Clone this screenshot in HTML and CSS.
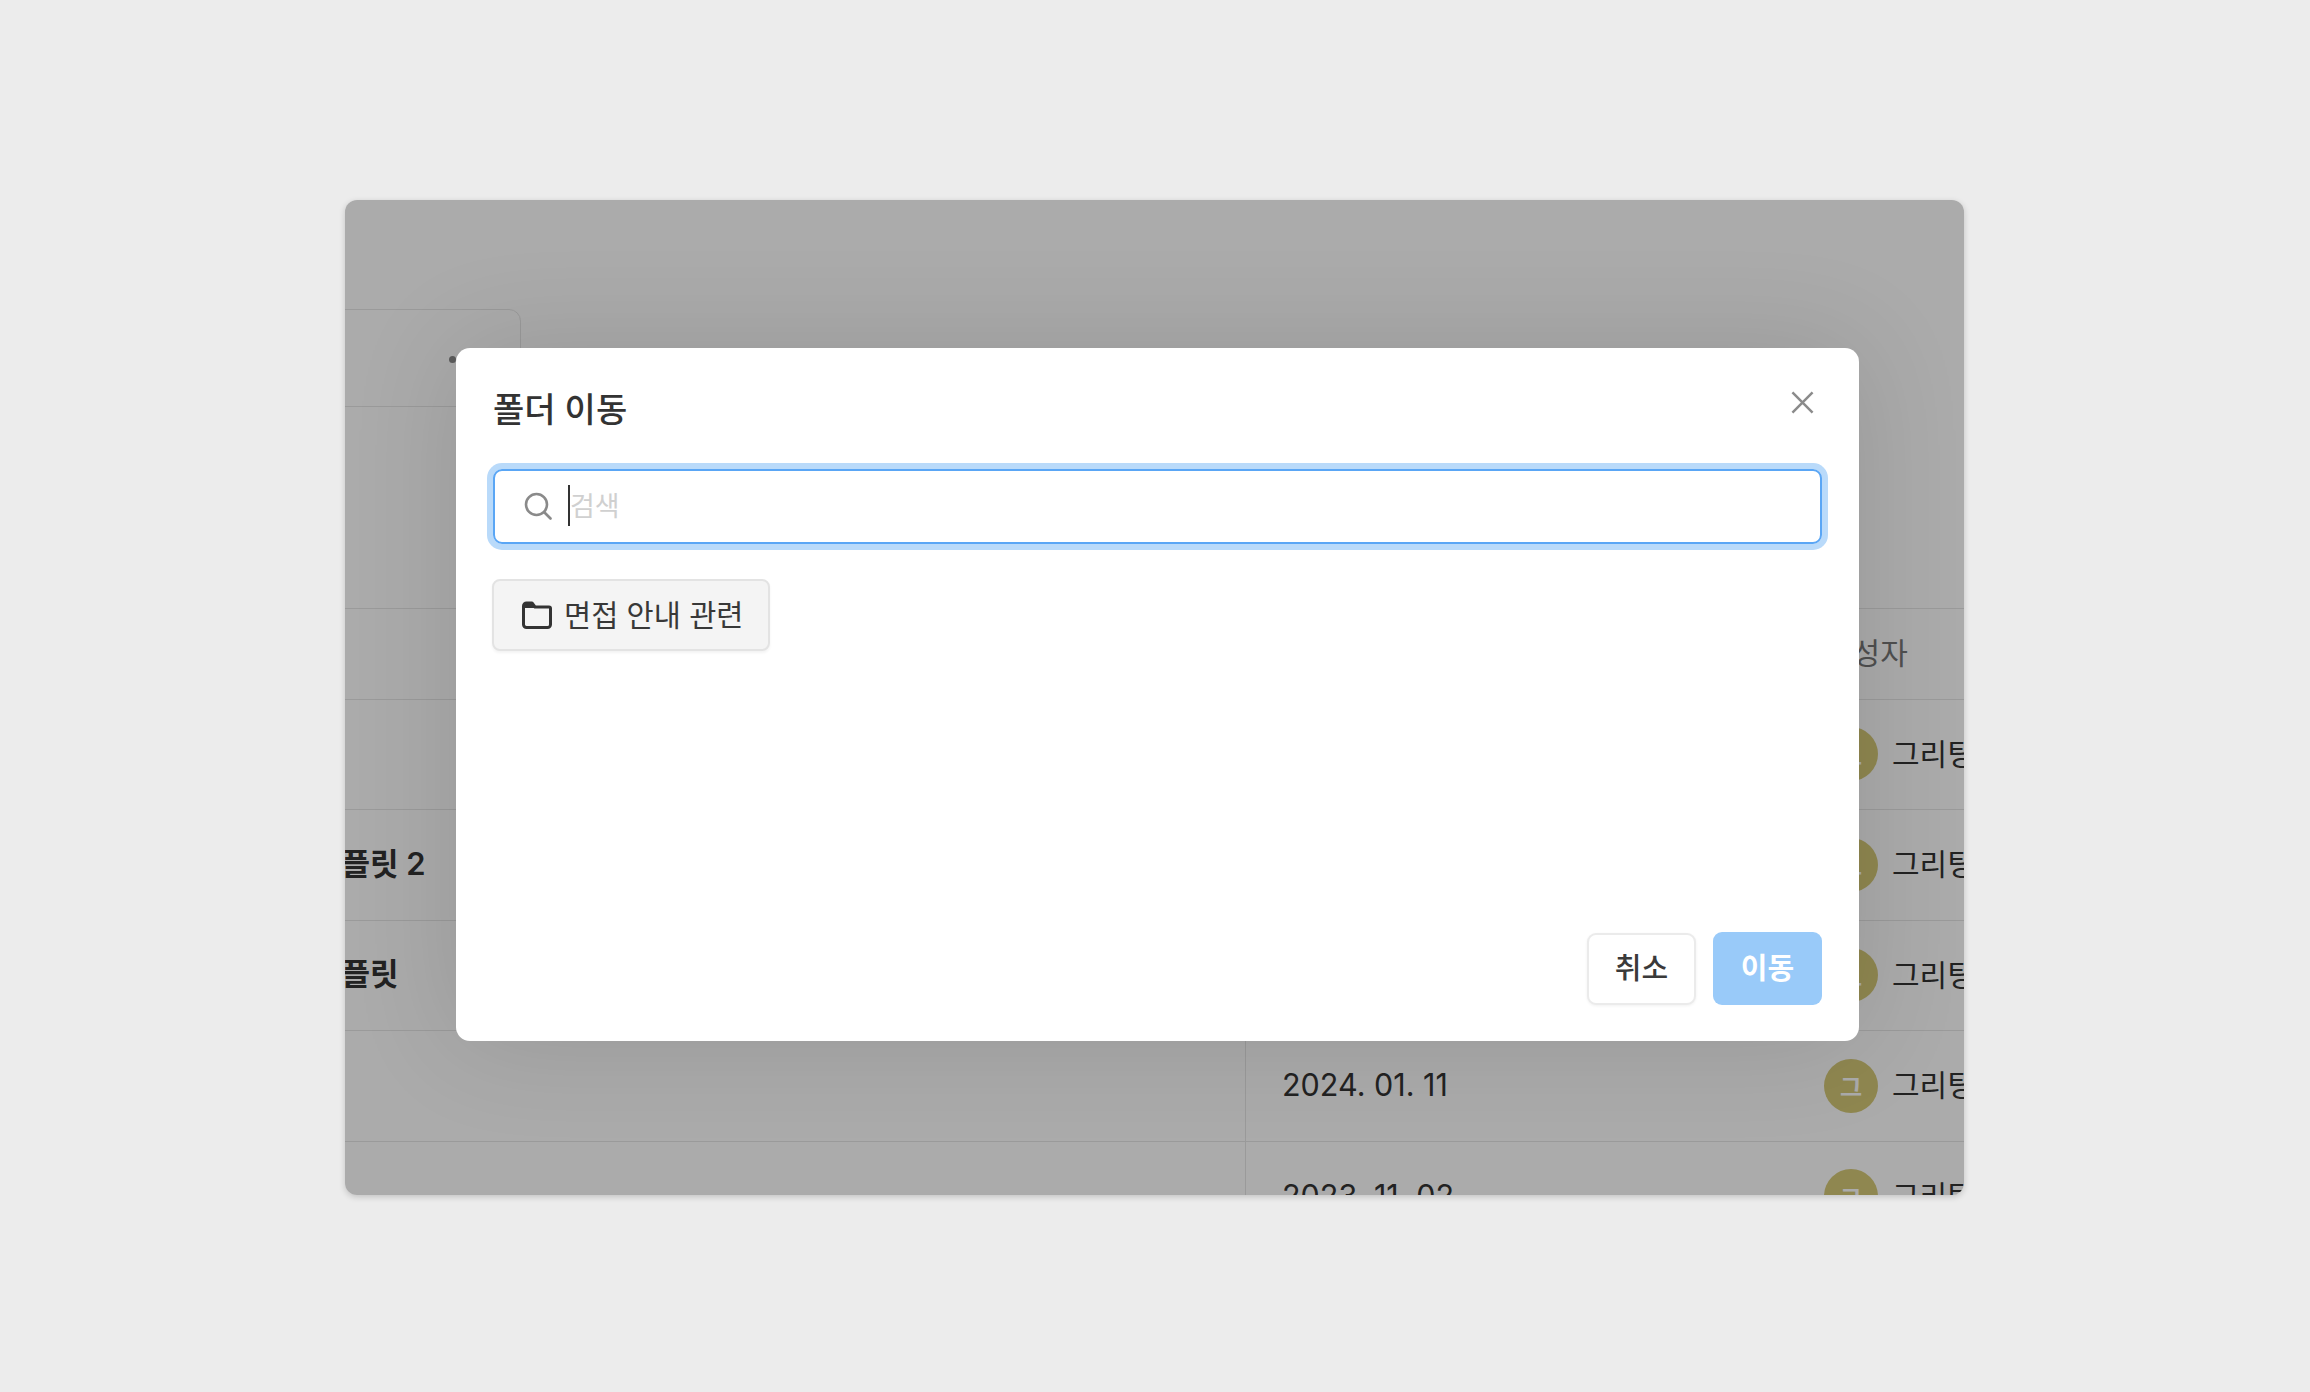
FILE: index.html
```html
<!DOCTYPE html>
<html lang="ko">
<head>
<meta charset="utf-8">
<title>폴더 이동</title>
<link rel="stylesheet" href="styles.css">
</head>
<body>
<div class="window">
  <div class="page">
    <div class="card"><span class="dot"></span></div>
    <div class="table">
      <div class="row head"><div class="cell name"></div><div class="cell date"></div><div class="cell author"><span class="head-label">작성자</span></div></div>
      <div class="row"><div class="cell name"></div><div class="cell date"></div><div class="cell author"><span class="avatar">그</span><span class="author-name">그리팅</span></div></div>
      <div class="row"><div class="cell name"><b>템플릿 2</b></div><div class="cell date"></div><div class="cell author"><span class="avatar">그</span><span class="author-name">그리팅</span></div></div>
      <div class="row"><div class="cell name"><b>템플릿</b></div><div class="cell date"></div><div class="cell author"><span class="avatar">그</span><span class="author-name">그리팅</span></div></div>
      <div class="row"><div class="cell name"></div><div class="cell date">2024. 01. 11</div><div class="cell author"><span class="avatar">그</span><span class="author-name">그리팅</span></div></div>
      <div class="row"><div class="cell name"></div><div class="cell date">2023. 11. 02</div><div class="cell author"><span class="avatar">그</span><span class="author-name">그리팅</span></div></div>
    </div>
  </div>
  <div class="overlay"></div>
  <div class="modal">
    <div class="modal-head">
      <h2 class="title">폴더 이동</h2>
      <svg class="close" viewBox="0 0 24 24" fill="none" stroke="#8b8b8b" stroke-width="2.6"><path d="M1.5 1.5 22.5 22.5M22.5 1.5 1.5 22.5"/></svg>
    </div>
    <div class="search">
      <svg class="search-icon" viewBox="0 0 28 28" fill="none" stroke="#8a8a8a" stroke-width="2.6" stroke-linecap="round"><circle cx="12.5" cy="12.5" r="10.5"/><path d="M20.5 20.5 26.5 26.5"/></svg>
      <span class="caret"></span>
      <span class="placeholder">검색</span>
    </div>
    <div class="folders">
      <div class="folder">
        <svg class="folder-icon" viewBox="0 0 30 28" fill="none" stroke="#333" stroke-width="3" stroke-linejoin="round"><path d="M1.500 5V23.500A3 3 0 0 0 4.500 26.500H25.500A3 3 0 0 0 28.500 23.500V7.500A1.500 1.500 0 0 0 27 6H13L10 2H4.500A3 3 0 0 0 1.500 5Z"/><path d="M3 3H10L13 7H3Z" fill="#333" stroke="none"/></svg>
        <span class="folder-label">면접 안내 관련</span>
      </div>
    </div>
    <div class="actions">
      <div class="btn cancel">취소</div>
      <div class="btn primary">이동</div>
    </div>
  </div>
</div>
</body>
</html>
```
FILE: styles.css
```css
* { box-sizing: border-box; }
html, body { height: 100%; }
body {
  margin: 0;
  background: #ececec;
  display: flex;
  align-items: center;
  justify-content: center;
  font-family: Inter, "Noto Sans CJK KR", sans-serif;
  color: #333;
}
.window {
  position: relative;
  width: 1619px;
  height: 995px;
  margin-top: 3px;
  margin-right: 1px;
  background: #fff;
  border-radius: 12px;
  overflow: hidden;
  box-shadow: 0 2px 6px rgba(0,0,0,.18);
}
.page {
  margin-left: -100px;
  width: 1900px;
  padding-top: 109px;
}
.card {
  width: 276px;
  height: 98px;
  margin-bottom: 201px;
  border: 1.5px solid #e6e6e6;
  border-radius: 12px;
  position: relative;
}
.dot {
  position: absolute;
  left: 203px;
  top: 46px;
  width: 7px;
  height: 7px;
  border-radius: 50%;
  background: #8a8a8a;
}
.table { border-top: 1.5px solid #e6e6e6; }
.row {
  display: grid;
  grid-template-columns: 1000px 579px 1fr;
  height: 110.5px;
  border-bottom: 1.5px solid #e6e6e6;
  font-size: 30.5px;
}
.row.head { height: 90.5px; color: #777; }
.cell { display: flex; align-items: center; min-width: 0; white-space: nowrap; }
.name { padding: 0 0 7px 68px; font-size: 31px; }
.name b { font-weight: 600; }
.date { border-left: 1.5px solid #e6e6e6; padding: 0 0 2px 36px; }
.head .date { border-left: 0; }
.author { gap: 14px; font-size: 30px; }
.author-name { margin-bottom: 5px; }
.head-label { margin: 0 0 5px 1px; }
.avatar {
  width: 54px;
  height: 54px;
  flex: none;
  border-radius: 50%;
  background: #d6c978;
  color: #fff;
  font-size: 24px;
  font-weight: 600;
  display: flex;
  align-items: center;
  justify-content: center;
}
.overlay {
  position: absolute;
  inset: 0;
  background: rgba(0,0,0,.33);
}
.modal {
  position: absolute;
  left: 111px;
  top: 148px;
  width: 1403px;
  height: 693px;
  padding: 0 37px 36px;
  background: #fff;
  border-radius: 14px;
  display: flex;
  flex-direction: column;
  box-shadow: 0 0 110px rgba(0,0,0,.12);
}
.modal-head {
  height: 121px;
  display: flex;
  justify-content: space-between;
  align-items: flex-start;
  flex: none;
}
.title {
  margin: 36px 0 0;
  font-size: 34px;
  line-height: 52px;
  font-weight: 500;
  color: #333;
}
.close { width: 23px; height: 23px; margin: 43px 8px 0 0; }
.search {
  height: 75px;
  flex: none;
  display: flex;
  align-items: center;
  padding: 0 0 2px 29px;
  border: 2.5px solid #5aa6f5;
  border-radius: 9px;
  box-shadow: 0 0 0 6px #b9dafa;
}
.search-icon { width: 28px; height: 28px; margin-right: 16px; }
.caret { width: 2px; height: 41px; background: #333; flex: none; }
.placeholder { font-size: 27px; color: #d0d0d0; margin: 0 0 2px 0; }
.folders { display: flex; margin-top: 35px; }
.folder {
  display: flex;
  align-items: center;
  gap: 12.5px;
  height: 72px;
  padding: 0 25px 0 27.5px;
  margin-left: -1px;
  background: #f4f4f4;
  border: 2px solid #e3e3e3;
  border-radius: 8px;
  box-shadow: 0 2px 3px rgba(0,0,0,.05);
  font-size: 29.5px;
  color: #383838;
}
.folder-label { margin-bottom: 5px; }
.folder-icon { width: 30px; height: 28px; flex: none; margin-bottom: 1px; }
.actions { margin-top: auto; display: flex; justify-content: flex-end; align-items: center; gap: 17px; }
.btn {
  width: 109px;
  height: 73px;
  border-radius: 9px;
  display: flex;
  align-items: center;
  justify-content: center;
  padding-bottom: 6px;
  font-size: 29px;
  font-weight: 500;
}
.cancel {
  height: 72px;
  border: 2px solid #ebebeb;
  background: #fff;
  color: #3a3a3a;
  box-shadow: 0 1px 3px rgba(0,0,0,.06);
}
.primary { background: #99caf9; color: #fff; font-weight: 600; }
```
